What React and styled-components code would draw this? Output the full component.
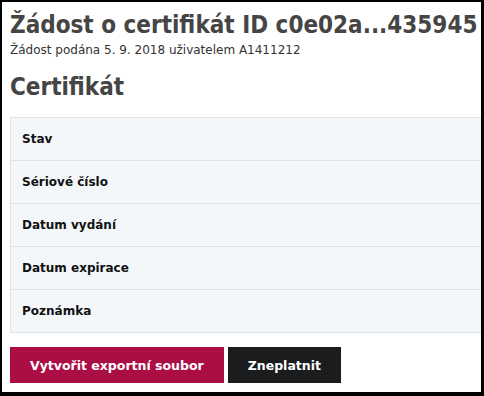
import React from "react";
import styled, { createGlobalStyle } from "styled-components";

const GlobalStyle = createGlobalStyle`
    html, body {
        margin: 0;
        padding: 0;
        background: #fff;
    }
    body {
        font-family: "DejaVu Sans", Verdana, sans-serif;
        color: #212529;
    }
`

const rows = ["Stav", "Sériové číslo", "Datum vydání", "Datum expirace", "Poznámka"];

function App() {
    return (
        <>
            <GlobalStyle />
            <Frame>
                <Title>Žádost o certifikát ID c0e02a...435945</Title>
                <Meta>Žádost podána 5. 9. 2018 uživatelem A1411212</Meta>
                <Section>Certifikát</Section>
                <Table>
                    {rows.map((label) => (
                        <Row key={label}>{label}</Row>
                    ))}
                </Table>
                <Actions>
                    <Button $variant="primary">Vytvořit exportní soubor</Button>
                    <Button $variant="dark">Zneplatnit</Button>
                </Actions>
            </Frame>
        </>
    );
}

const Frame = styled.div`
    box-sizing: border-box;
    width: 484px;
    height: 396px;
    overflow: hidden;
    border-style: solid;
    border-color: #000;
    border-width: 2px 3px 4px 2px;
    padding: 8px 0 0 8px;
`
const Title = styled.h1`
    margin: 0;
    font-family: "DejaVu Sans Condensed", "DejaVu Sans", sans-serif;
    font-size: 24px;
    line-height: 30px;
    font-weight: 700;
    color: #454545;
    white-space: nowrap;
`
const Meta = styled.div`
    margin-top: 2px;
    font-size: 12px;
    line-height: 16px;
    color: #333;
`
const Section = styled.h2`
    margin: 14px 0 0;
    font-family: "DejaVu Sans Condensed", "DejaVu Sans", sans-serif;
    font-size: 24px;
    line-height: 30px;
    font-weight: 700;
    color: #454545;
`
const Table = styled.div`
    display: flex;
    flex-direction: column;
    width: 520px;
    margin-top: 15px;
    background: #f3f7fa;
    border-left: 1px solid #dee2e6;
    border-bottom: 1px solid #dee2e6;
`
const Row = styled.div`
    display: flex;
    align-items: center;
    height: 42px;
    padding: 0 11px;
    border-top: 1px solid #dee2e6;
    font-size: 12px;
    font-weight: 700;
    color: #111;
`
const Actions = styled.div`
    display: flex;
    gap: 4px;
    margin-top: 14px;
`
const Button = styled.button`
    height: 36px;
    padding: 0 20px;
    border: none;
    border-radius: 0;
    font-family: inherit;
    font-size: 12.5px;
    font-weight: 700;
    color: #fff;
    background: ${(p) => (p.$variant === "primary" ? "#ab0d45" : "#1b1c1e")};
    cursor: pointer;
`

export default App;
